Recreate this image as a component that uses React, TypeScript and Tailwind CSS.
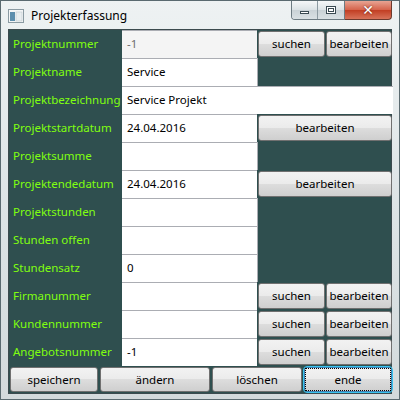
import React from 'react';

const font = { fontFamily: '"Segoe UI", "Noto Sans", "Liberation Sans", sans-serif' };

type Row = {
  label: string;
  value?: string;
  kind: 'two' | 'one' | 'wide' | 'none';
  readOnly?: boolean;
};

const rows: Row[] = [
  { label: 'Projektnummer', value: '-1', kind: 'two', readOnly: true },
  { label: 'Projektname', value: 'Service', kind: 'none' },
  { label: 'Projektbezeichnung', value: 'Service Projekt', kind: 'wide' },
  { label: 'Projektstartdatum', value: '24.04.2016', kind: 'one' },
  { label: 'Projektsumme', kind: 'none' },
  { label: 'Projektendedatum', value: '24.04.2016', kind: 'one' },
  { label: 'Projektstunden', kind: 'none' },
  { label: 'Stunden offen', kind: 'none' },
  { label: 'Stundensatz', value: '0', kind: 'none' },
  { label: 'Firmanummer', kind: 'two' },
  { label: 'Kundennummer', kind: 'two' },
  { label: 'Angebotsnummer', value: '-1', kind: 'two' },
];

function Btn({ children, focused, className = '' }: { children: React.ReactNode; focused?: boolean; className?: string }) {
  return (
    <div
      className={`flex items-center justify-center rounded-[3px] border text-[11.5px] text-black ${
        focused ? 'border-[#3c7fb1] outline outline-1 outline-[#39c4f0]' : 'border-[#707070]'
      } bg-[linear-gradient(#f2f2f2_0%,#ebebeb_50%,#dddddd_50%,#cfcfcf_100%)] ${className}`}
    >
      {focused ? (
        <span className="flex h-full w-full items-center justify-center border border-dotted border-black">{children}</span>
      ) : (
        children
      )}
    </div>
  );
}

function TextBox({ value, readOnly, wide }: { value?: string; readOnly?: boolean; wide?: boolean }) {
  return (
    <div
      className={`flex h-[28px] items-center border-t border-[#abadb3] px-[5px] pb-[1px] text-[11.5px] ${
        readOnly ? 'bg-[#f4f4f4] text-[#6d6d6d]' : 'bg-white text-black'
      } ${wide ? 'col-span-3' : ''}`}
    >
      {value}
    </div>
  );
}

export default function App() {
  return (
    <div className="relative h-[400px] w-[400px] overflow-hidden border border-[#5a6a70] bg-[linear-gradient(180deg,#eef2f3_0%,#dde4e6_50%,#d3dadc_100%)]" style={font}>
      {/* title bar */}
      <div className="flex h-[28px] items-start">
        <div className="flex items-center gap-[7px] pl-[7px] pt-[8px]">
          <svg width="16" height="14" viewBox="0 0 16 14">
            <rect x="0.5" y="0.5" width="15" height="13" fill="#f4f6f7" stroke="#8a9aa2" />
            <rect x="2" y="3" width="5" height="9" fill="#5d8fae" />
            <rect x="8" y="3" width="6" height="9" fill="#e9eef0" stroke="#b6c2c8" strokeWidth="0.5" />
          </svg>
          <span className="text-[12px] leading-none text-black">Projekterfassung</span>
        </div>
        <div className="ml-auto mr-[7px] flex">
          <div className="flex h-[19px] overflow-hidden rounded-bl-[4px] border border-t-0 border-[#6d7b82]">
            <div className="flex w-[26px] items-center justify-center border-r border-[#8c9aa1] bg-[linear-gradient(#f5f7f8,#dbe2e5_50%,#c9d2d6_50%,#d9e0e3)]">
              <div className="mt-[4px] h-[3px] w-[9px] border border-[#3a4a52] bg-white" />
            </div>
            <div className="flex w-[26px] items-center justify-center bg-[linear-gradient(#f5f7f8,#dbe2e5_50%,#c9d2d6_50%,#d9e0e3)]">
              <div className="h-[8px] w-[10px] border border-[#3a4a52] bg-white">
                <div className="m-[1px] h-[4px] border border-[#3a4a52]" />
              </div>
            </div>
          </div>
          <div className="flex h-[19px] w-[47px] items-center justify-center rounded-br-[4px] border border-l-0 border-t-0 border-[#6d3a2e] bg-[linear-gradient(#e8a493,#d5624a_50%,#c13d22_50%,#d8735a)]">
            <span className="text-[14px] font-bold leading-none text-white [text-shadow:0_0_2px_#5a1a10]" style={{ fontFamily: '"DejaVu Sans", sans-serif' }}>
              ✕
            </span>
          </div>
        </div>
      </div>

      {/* client area */}
      <div className="mx-[7px] border border-[#3b4a4e] bg-[#2f4f4f]">
        <div className="grid grid-cols-[113px_135px_68px_68px]">
          {rows.map((r) => (
            <React.Fragment key={r.label}>
              <div className="flex h-[28px] items-center overflow-hidden whitespace-nowrap pb-[1px] pl-[4px] text-[11.5px] text-[#80ff10]">{r.label}</div>
              <TextBox value={r.value} readOnly={r.readOnly} wide={r.kind === 'wide'} />
              {r.kind === 'two' && (
                <>
                  <Btn className="m-[1px] mr-0">suchen</Btn>
                  <Btn className="m-[1px]">bearbeiten</Btn>
                </>
              )}
              {r.kind === 'one' && <Btn className="col-span-2 m-[1px]">bearbeiten</Btn>}
              {r.kind === 'none' && <div className="col-span-2 border-l border-[#abadb3]" />}
            </React.Fragment>
          ))}
        </div>
        <div className="grid h-[27px] grid-cols-[90px_112px_92px_90px] bg-[#2f4f4f]">
          <Btn className="m-[1px]">speichern</Btn>
          <Btn className="m-[1px]">ändern</Btn>
          <Btn className="m-[1px]">löschen</Btn>
          <Btn className="m-[1px]" focused>
            ende
          </Btn>
        </div>
      </div>
    </div>
  );
}
